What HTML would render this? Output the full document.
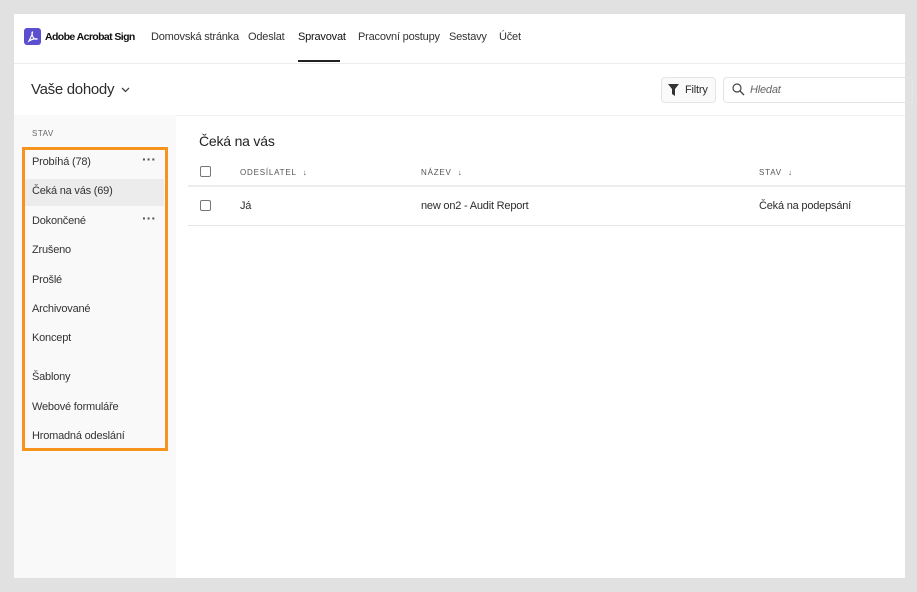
<!DOCTYPE html>
<html><head><meta charset="utf-8"><style>
*{margin:0;padding:0;box-sizing:border-box}
body{width:917px;height:592px;background:#e1e1e1;font-family:"Liberation Sans",sans-serif;color:#2c2c2c;position:relative;overflow:hidden;font-size:11px;letter-spacing:-0.2px}
.a{position:absolute;white-space:nowrap}
#main{position:absolute;left:14px;top:14px;width:891px;height:564px;background:#fff}
.nav{top:31px;font-size:11px;color:#333}
.side{position:absolute;left:14px;top:115px;width:162px;height:463px;background:#f9f9f9}
.item{left:32px;font-size:11px;color:#333}
.dots{left:142px;font-size:14px;font-weight:bold;color:#555;letter-spacing:0px}
.cb{position:absolute;width:11px;height:11px;border:1.5px solid #777;border-radius:2px}
.th{font-size:8px;letter-spacing:0.8px;color:#555}
.line{position:absolute;height:1px;background:#e6e6e6}
</style></head><body>
<div id="main"></div>
<div class="line" style="left:14px;top:63px;width:891px;background:#ececec"></div>
<div class="a" style="left:24px;top:28px;width:17px;height:17px;background:#5b4fd0;border-radius:3px"></div>
<svg class="a" style="left:24px;top:28px" width="17" height="17" viewBox="0 0 17 17"><path d="M5 13 C7 9 9 5 8.5 4 C8 4 7.5 6 9 9 C10 11 12 11.5 13 11 C12 10.5 9 10.5 5 13Z" fill="none" stroke="#fff" stroke-width="1.2"/></svg>
<div class="a nav" style="left:45px;font-weight:bold;color:#111;font-size:10.5px;letter-spacing:-0.6px">Adobe Acrobat Sign</div>
<div class="a nav" style="left:151px">Domovská stránka</div>
<div class="a nav" style="left:248px">Odeslat</div>
<div class="a nav" style="left:298px;color:#111">Spravovat</div>
<div class="a" style="left:298px;top:60px;width:42px;height:2px;background:#222"></div>
<div class="a nav" style="left:358px">Pracovní postupy</div>
<div class="a nav" style="left:449px">Sestavy</div>
<div class="a nav" style="left:499px">Účet</div>
<div class="a" style="left:31px;top:81px;font-size:15px;letter-spacing:-0.3px;color:#2c2c2c">Vaše dohody</div>
<svg class="a" style="left:121px;top:87px" width="9" height="6"><path d="M1 1l3.5 3.5L8 1" fill="none" stroke="#444" stroke-width="1.3"/></svg>
<div class="a" style="left:661px;top:77px;width:55px;height:26px;border:1px solid #e4e4e4;border-radius:4px;background:#fafafa"></div>
<svg class="a" style="left:668px;top:84px" width="11" height="12"><path d="M0 0h11L7 5v7L4 10V5z" fill="#333"/></svg>
<div class="a" style="left:685px;top:84px;font-size:11px">Filtry</div>
<div class="a" style="left:723px;top:77px;width:190px;height:26px;border:1px solid #e4e4e4;border-radius:4px 0 0 4px"></div>
<svg class="a" style="left:732px;top:83px" width="13" height="13"><circle cx="5" cy="5" r="4" fill="none" stroke="#444" stroke-width="1.2"/><path d="M8 8l4 4" stroke="#444" stroke-width="1.3"/></svg>
<div class="a" style="left:750px;top:84px;font-size:11px;font-style:italic;color:#666">Hledat</div>
<div class="line" style="left:14px;top:115px;width:891px;background:#f1f1f1"></div>
<div class="side"></div>
<div class="a" style="left:32px;top:129px;font-size:8px;letter-spacing:0.5px;color:#666">STAV</div>
<div class="a" style="left:25px;top:179px;width:139px;height:27px;background:#ececec"></div>
<div class="a item" style="top:156px">Probíhá (78)</div><div class="a dots" style="top:151px">···</div>
<div class="a item" style="top:185px">Čeká na vás (69)</div>
<div class="a item" style="top:215px">Dokončené</div><div class="a dots" style="top:210px">···</div>
<div class="a item" style="top:244px">Zrušeno</div>
<div class="a item" style="top:274px">Prošlé</div>
<div class="a item" style="top:303px">Archivované</div>
<div class="a item" style="top:332px">Koncept</div>
<div class="a item" style="top:371px">Šablony</div>
<div class="a item" style="top:401px">Webové formuláře</div>
<div class="a item" style="top:430px">Hromadná odeslání</div>
<div class="a" style="left:22px;top:147px;width:146px;height:304px;border:3px solid #f7941d"></div>
<div class="a" style="left:199px;top:133px;font-size:14px;color:#222">Čeká na vás</div>
<div class="cb" style="left:200px;top:166px"></div>
<div class="a th" style="left:240px;top:168px">ODESÍLATEL&nbsp; ↓</div>
<div class="a th" style="left:421px;top:168px">NÁZEV&nbsp; ↓</div>
<div class="a th" style="left:759px;top:168px">STAV&nbsp; ↓</div>
<div class="line" style="left:188px;top:185px;width:717px;height:2px;background:#ececec"></div>
<div class="cb" style="left:200px;top:200px"></div>
<div class="a" style="left:240px;top:200px">Já</div>
<div class="a" style="left:421px;top:200px">new on2 - Audit Report</div>
<div class="a" style="left:759px;top:200px">Čeká na podepsání</div>
<div class="line" style="left:188px;top:225px;width:717px"></div>
</body></html>
